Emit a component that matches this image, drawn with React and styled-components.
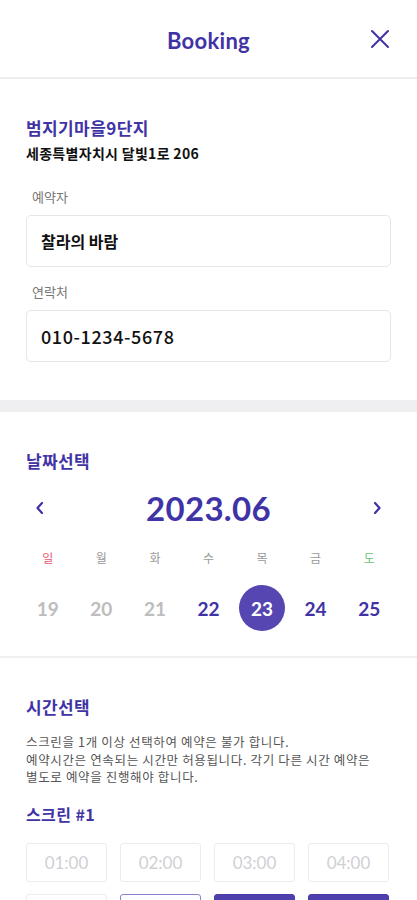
import React from "react";
import styled, { createGlobalStyle } from "styled-components";

const purple = "#3f33a6";

const GlobalStyle = createGlobalStyle`
  html, body {
    margin: 0;
    padding: 0;
    background: #fff;
  }
  body {
    font-family: "Noto Sans CJK KR", "Noto Sans", sans-serif;
    color: #111;
  }
`;

const Page = styled.div`
  width: 417px;
  height: 900px;
  overflow: hidden;
  background: #fff;
`;

const Header = styled.header`
  height: 77px;
  display: flex;
  align-items: center;
  justify-content: center;
  position: relative;
  border-bottom: 2px solid #ededee;
`;

const HeaderTitle = styled.h1`
  margin: 0;
  margin-top: 4px;
  font-family: "Lato", "Noto Sans", sans-serif;
  font-weight: 700;
  font-size: 22px;
  color: ${purple};
  letter-spacing: 0.3px;
`;

const CloseButton = styled.button`
  position: absolute;
  right: 26px;
  top: 28px;
  border: 0;
  background: none;
  padding: 0;
  width: 22px;
  height: 22px;
  display: flex;
  align-items: center;
  justify-content: center;
`;

const Section = styled.section`
  padding: ${(p) => p.$pad || "36px 26px 38px"};
  border-bottom: ${(p) => p.$divider || "none"};
`;

const SectionTitle = styled.h2`
  margin: ${(p) => p.$top || "0"} 0 0;
  font-size: ${(p) => p.$size || "17px"};
  font-weight: 700;
  color: ${purple};
  line-height: 22px;
  letter-spacing: 0.4px;
`;

const Address = styled.div`
  margin-top: 5px;
  font-size: 14px;
  font-weight: 700;
  color: #111;
  line-height: 18px;
  letter-spacing: 0.3px;
`;

const Label = styled.div`
  margin: ${(p) => p.$top || "17px"} 0 0 6px;
  font-size: 13px;
  color: #777;
  line-height: 16px;
`;

const Field = styled.div`
  margin-top: 10px;
  height: 50px;
  border: 1px solid #e6e6e8;
  border-radius: 5px;
  display: flex;
  align-items: center;
  padding: 0 14px;
  font-size: ${(p) => p.$size || "16px"};
  font-weight: ${(p) => p.$weight || 700};
  letter-spacing: ${(p) => p.$spacing || "0"};
  color: #111;
`;

const Band = styled.div`
  height: 12px;
  background: #efeff1;
`;

const MonthRow = styled.div`
  margin-top: 16px;
  display: flex;
  align-items: center;
  justify-content: space-between;
  padding: 0 6px 0 6px;
`;

const Arrow = styled.button`
  border: 0;
  background: none;
  padding: 0;
  width: 16px;
  height: 16px;
  display: flex;
  align-items: center;
  justify-content: center;
`;

const Month = styled.div`
  font-family: "Lato", "Noto Sans", sans-serif;
  font-size: 33px;
  font-weight: 700;
  color: ${purple};
  line-height: 40px;
  letter-spacing: 0.3px;
`;

const WeekGrid = styled.div`
  display: grid;
  grid-template-columns: repeat(7, 1fr);
  margin: ${(p) => p.$top || "0"} -5px 0 -5px;
  align-items: center;
  justify-items: center;
`;

const DayName = styled.div`
  font-size: 12px;
  color: ${(p) => p.$color || "#999"};
  line-height: 16px;
`;

const DateCell = styled.div`
  width: 46px;
  height: 46px;
  border-radius: 50%;
  display: flex;
  align-items: center;
  justify-content: center;
  font-family: "Lato", "Noto Sans", sans-serif;
  font-size: 19px;
  font-weight: 700;
  background: ${(p) => (p.$selected ? "#5546b1" : "transparent")};
  color: ${(p) => (p.$selected ? "#fff" : p.$past ? "#bdbdbd" : purple)};
`;

const Notice = styled.p`
  margin: 15px 0 0;
  font-size: 12.5px;
  line-height: 17.5px;
  letter-spacing: 0.65px;
  color: #555;
`;

const SlotGrid = styled.div`
  margin-top: 18px;
  display: grid;
  grid-template-columns: repeat(4, 81px);
  column-gap: 13px;
  row-gap: 12px;
`;

const Slot = styled.div`
  height: 39px;
  border-radius: 3px;
  box-sizing: border-box;
  border: 1px solid
    ${(p) =>
      p.$state === "active"
        ? "#4a3bab"
        : p.$state === "outline"
        ? "#8a7fd0"
        : "#ececee"};
  background: ${(p) => (p.$state === "active" ? "#4e3fae" : "#fff")};
  color: ${(p) => (p.$state === "active" ? "#fff" : p.$state === "disabled" ? "#d0d0d4" : "#333")};
  display: flex;
  align-items: center;
  justify-content: center;
  font-family: "Lato", "Noto Sans", sans-serif;
  font-size: 17px;
`;

const days = [
  { name: "일", color: "#e8556d" },
  { name: "월" },
  { name: "화" },
  { name: "수" },
  { name: "목" },
  { name: "금" },
  { name: "도", color: "#6fbf74" },
];

const dates = [
  { d: 19, past: true },
  { d: 20, past: true },
  { d: 21, past: true },
  { d: 22 },
  { d: 23, selected: true },
  { d: 24 },
  { d: 25 },
];

const slots = [
  { t: "01:00", s: "disabled" },
  { t: "02:00", s: "disabled" },
  { t: "03:00", s: "disabled" },
  { t: "04:00", s: "disabled" },
  { t: "05:00", s: "default" },
  { t: "06:00", s: "outline" },
  { t: "07:00", s: "active" },
  { t: "08:00", s: "active" },
];

export default function App() {
  return (
    <Page>
      <GlobalStyle />
      <Header>
        <HeaderTitle>Booking</HeaderTitle>
        <CloseButton aria-label="close">
          <svg width="20" height="20" viewBox="0 0 20 20">
            <path d="M2 2L18 18M18 2L2 18" stroke={purple} strokeWidth="2" strokeLinecap="round" />
          </svg>
        </CloseButton>
      </Header>

      <Section $pad="38px 26px 38px">
        <SectionTitle>범지기마을9단지</SectionTitle>
        <Address>세종특별자치시 달빛1로 206</Address>
        <Label $top="27px">예약자</Label>
        <Field>찰라의 바람</Field>
        <Label>연락처</Label>
        <Field $size="18px" $weight={500} $spacing="0.6px">
          010-1234-5678
        </Field>
      </Section>

      <Band />

      <Section $pad="38px 26px 25px" $divider="2px solid #f0f0f2">
        <SectionTitle>날짜선택</SectionTitle>
        <MonthRow>
          <Arrow aria-label="prev">
            <svg width="10" height="14" viewBox="0 0 10 14">
              <path d="M7 2L2.5 7L7 12" fill="none" stroke={purple} strokeWidth="2.2" strokeLinecap="round" strokeLinejoin="round" />
            </svg>
          </Arrow>
          <Month>2023.06</Month>
          <Arrow aria-label="next">
            <svg width="10" height="14" viewBox="0 0 10 14">
              <path d="M3 2L7.5 7L3 12" fill="none" stroke={purple} strokeWidth="2.2" strokeLinecap="round" strokeLinejoin="round" />
            </svg>
          </Arrow>
        </MonthRow>
        <WeekGrid $top="22px">
          {days.map((d) => (
            <DayName key={d.name} $color={d.color}>
              {d.name}
            </DayName>
          ))}
        </WeekGrid>
        <WeekGrid $top="19px">
          {dates.map((d) => (
            <DateCell key={d.d} $past={d.past} $selected={d.selected}>
              {d.d}
            </DateCell>
          ))}
        </WeekGrid>
      </Section>

      <Section $pad="38px 26px 30px">
        <SectionTitle>시간선택</SectionTitle>
        <Notice>
          스크린을 1개 이상 선택하여 예약은 불가 합니다.
          <br />
          예약시간은 연속되는 시간만 허용됩니다. 각기 다른 시간 예약은
          <br />
          별도로 예약을 진행해야 합니다.
        </Notice>
        <SectionTitle $size="16px" $top="17px">
          스크린 #1
        </SectionTitle>
        <SlotGrid>
          {slots.map((s) => (
            <Slot key={s.t} $state={s.s}>
              {s.t}
            </Slot>
          ))}
        </SlotGrid>
      </Section>
    </Page>
  );
}
